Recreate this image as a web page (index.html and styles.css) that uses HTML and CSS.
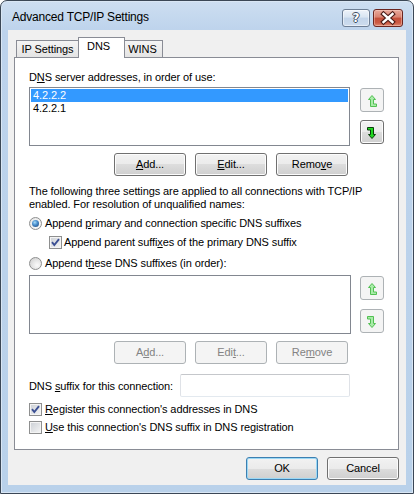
FILE: index.html
```html
<!DOCTYPE html>
<html>
<head>
<meta charset="utf-8">
<title>Advanced TCP/IP Settings</title>
<link rel="stylesheet" href="styles.css">
</head>
<body>
<div class="window">
  <div class="titlebar">
    <div class="title">Advanced TCP/IP Settings</div>
    <div class="caption">
      <div class="cap help"><span class="qmark">?</span></div>
      <div class="cap close">
        <svg width="28" height="16" viewBox="0 0 28 16">
          <path d="M9.5 4 L18.5 12 M18.5 4 L9.5 12" stroke="#4a1a16" stroke-width="4.6" stroke-linecap="square" fill="none"/>
          <path d="M9.5 4 L18.5 12 M18.5 4 L9.5 12" stroke="#ffffff" stroke-width="2.4" stroke-linecap="square" fill="none"/>
        </svg>
      </div>
    </div>
  </div>
  <div class="client">
    <div class="tabs">
      <div class="tab tab-ip">IP Settings</div>
      <div class="tab tab-dns">DNS</div>
      <div class="tab tab-wins">WINS</div>
    </div>
    <div class="panel">
      <div class="label">D<u>N</u>S server addresses, in order of use:</div>
      <div class="list-row list1">
        <div class="listbox">
          <div class="item selected">4.2.2.2</div>
          <div class="item">4.2.2.1</div>
        </div>
        <div class="arrows">
          <div class="arrow-btn disabled">
            <svg width="22" height="22" viewBox="0 0 22 22"><polygon points="11,6.5 14.5,10.5 12.5,10.5 12.5,15 15.5,15 15.5,17.5 9.5,17.5 9.5,10.5 7.5,10.5" fill="#a9eca9" stroke="#52c052" stroke-width="1" stroke-linejoin="miter"/></svg>
          </div>
          <div class="arrow-btn">
            <svg width="22" height="22" viewBox="0 0 22 22"><polygon transform="rotate(180 11 12)" points="11,6.5 14.5,10.5 12.5,10.5 12.5,15 15.5,15 15.5,17.5 9.5,17.5 9.5,10.5 7.5,10.5" fill="#20d820" stroke="#0b3d0b" stroke-width="1" stroke-linejoin="miter"/></svg>
          </div>
        </div>
      </div>
      <div class="btn-row">
        <div class="btn"><u>A</u>dd...</div>
        <div class="btn"><u>E</u>dit...</div>
        <div class="btn">Remo<u>v</u>e</div>
      </div>
      <p class="note">The following three settings are applied to all connections with TCP/IP<br>enabled. For resolution of unqualified names:</p>
      <div class="opt r1"><span class="radio checked"><span class="dot"></span></span><span>Append <u>p</u>rimary and connection specific DNS suffixes</span></div>
      <div class="opt sub">
        <span class="check"><svg width="11" height="11" viewBox="0 0 11 11"><path d="M2 5.2 L4.3 8 L9 2.2" fill="none" stroke="#3b4f93" stroke-width="1.9"/></svg></span>
        <span>Append parent suffi<u>x</u>es of the primary DNS suffix</span>
      </div>
      <div class="opt r2"><span class="radio"></span><span>Append t<u>h</u>ese DNS suffixes (in order):</span></div>
      <div class="list-row list2">
        <div class="listbox"></div>
        <div class="arrows">
          <div class="arrow-btn disabled">
            <svg width="22" height="22" viewBox="0 0 22 22"><polygon points="11,6.5 14.5,10.5 12.5,10.5 12.5,15 15.5,15 15.5,17.5 9.5,17.5 9.5,10.5 7.5,10.5" fill="#a9eca9" stroke="#52c052" stroke-width="1"/></svg>
          </div>
          <div class="arrow-btn disabled">
            <svg width="22" height="22" viewBox="0 0 22 22"><polygon transform="rotate(180 11 12)" points="11,6.5 14.5,10.5 12.5,10.5 12.5,15 15.5,15 15.5,17.5 9.5,17.5 9.5,10.5 7.5,10.5" fill="#a9eca9" stroke="#52c052" stroke-width="1"/></svg>
          </div>
        </div>
      </div>
      <div class="btn-row">
        <div class="btn disabled">A<u>d</u>d...</div>
        <div class="btn disabled">Edi<u>t</u>...</div>
        <div class="btn disabled">Re<u>m</u>ove</div>
      </div>
      <div class="suffix-row">
        <span>DNS <u>s</u>uffix for this connection:</span>
        <div class="textbox"></div>
      </div>
      <div class="opt reg">
        <span class="check"><svg width="11" height="11" viewBox="0 0 11 11"><path d="M2 5.2 L4.3 8 L9 2.2" fill="none" stroke="#3b4f93" stroke-width="1.9"/></svg></span>
        <span><u>R</u>egister this connection's addresses in DNS</span>
      </div>
      <div class="opt use">
        <span class="check"></span>
        <span><u>U</u>se this connection's DNS suffix in DNS registration</span>
      </div>
    </div>
    <div class="dialog-buttons">
      <div class="btn default">OK</div>
      <div class="btn">Cancel</div>
    </div>
  </div>
</div>
</body>
</html>
```

FILE: styles.css
```css
* { box-sizing: border-box; }
html, body { margin: 0; padding: 0; }
body {
  width: 414px;
  height: 494px;
  overflow: hidden;
  background: #ffffff;
  font-family: "Liberation Sans", Arial, sans-serif;
  font-size: 11px;
  letter-spacing: -0.1px;
  color: #000;
}
u { text-decoration: underline; text-underline-offset: 1px; }

.window {
  width: 414px;
  height: 494px;
  display: flex;
  flex-direction: column;
  border: 1px solid #3b4756;
  border-radius: 7px 7px 0 0;
  background: linear-gradient(#cddef1 0px, #bdd3ec 30px, #b9d1ea 100%);
  box-shadow: inset 0 0 0 1px #d9e6f4;
  padding: 0 7px 8px 7px;
}

.titlebar {
  height: 29px;
  display: flex;
  justify-content: space-between;
  align-items: flex-start;
  flex: none;
}
.title {
  margin-top: 9px;
  padding-left: 4px;
  font-size: 12px;
  letter-spacing: -0.2px;
  line-height: 15px;
  color: #000;
}
.caption {
  display: flex;
  gap: 3px;
  margin-top: 8px;
  margin-right: 3px;
}
.cap {
  height: 18px;
  border-radius: 3px;
  display: flex;
  align-items: center;
  justify-content: center;
}
.help {
  width: 28px;
  border: 1px solid #6d7e95;
  background: linear-gradient(#eef3fa 0%, #d9e5f2 45%, #c3d5ea 50%, #cddcee 100%);
  box-shadow: inset 0 0 0 1px rgba(255,255,255,0.5);
}
.qmark {
  font-family: "DejaVu Sans", sans-serif;
  font-weight: bold;
  font-size: 12px;
  line-height: 14px;
  letter-spacing: 0;
  color: #ffffff;
  text-shadow: 1px 0 0 #3e4d62, -1px 0 0 #3e4d62, 0 1px 0 #3e4d62, 0 -1px 0 #3e4d62;
}
.close {
  width: 30px;
  border: 1px solid #6b2520;
  background: linear-gradient(#e9a99c 0%, #d98170 45%, #c44e3a 50%, #cc5a44 80%, #de8a73 100%);
  box-shadow: inset 0 0 0 1px rgba(255,220,210,0.4);
}

.client {
  flex: 1;
  background: #f0f0f0;
  display: flex;
  flex-direction: column;
}

.tabs {
  display: flex;
  align-items: flex-end;
  height: 21px;
  margin-top: 7px;
  margin-left: 8px;
}
.tab {
  height: 18px;
  border: 1px solid #898c95;
  border-bottom: none;
  background: linear-gradient(#f4f4f4, #e3e3e3);
  line-height: 13px;
  padding-top: 2px;
  text-align: center;
}
.tab-ip { width: 63px; }
.tab-dns {
  width: 47px;
  height: 21px;
  margin-left: -1px;
  background: #ffffff;
  position: relative;
  z-index: 1;
  padding-right: 6px;
}
.tab-wins { width: 39px; margin-left: -1px; padding-right: 2px; }

.panel {
  margin: -1px 7px 0 6px;
  border: 1px solid #898c95;
  background: #ffffff;
  padding: 13px 0 14px 14px;
}
.label { line-height: 13px; }

.list-row { display: flex; align-items: flex-start; }
.list1 { margin-top: 3px; }
.list2 { margin-top: 4px; }
.listbox {
  width: 321px;
  height: 59px;
  border: 1px solid #828790;
  padding: 1px;
  background: #fff;
}
.list2 .listbox { width: 322px; }
.item {
  height: 13px;
  line-height: 13px;
  padding-left: 2px;
}
.item.selected { background: #3399ff; color: #ffffff; }

.arrows {
  display: flex;
  flex-direction: column;
  gap: 8px;
  padding-top: 1px;
  margin-left: 10px;
}
.list2 .arrows { gap: 9px; margin-left: 9px; }
.arrow-btn {
  width: 24px;
  height: 24px;
  border: 1px solid #707070;
  border-radius: 3px;
  background: linear-gradient(#f2f2f2 0%, #ebebeb 50%, #dddddd 50%, #cfcfcf 100%);
  box-shadow: inset 0 0 0 1px #fcfcfc;
}
.arrow-btn svg { display: block; }
.arrow-btn.disabled {
  border-color: #adb2b5;
  background: #f4f4f4;
  box-shadow: none;
}

.btn-row {
  width: 319px;
  display: flex;
  justify-content: flex-end;
  gap: 9px;
  margin-top: 7px;
}
.btn {
  width: 72px;
  height: 23px;
  border: 1px solid #707070;
  border-radius: 3px;
  background: linear-gradient(#f2f2f2 0%, #ebebeb 50%, #dddddd 50%, #cfcfcf 100%);
  box-shadow: inset 0 0 0 1px #fcfcfc;
  display: flex;
  align-items: center;
  justify-content: center;
  line-height: 13px;
}
.btn.disabled {
  border-color: #adb2b5;
  background: #f4f4f4;
  box-shadow: none;
  color: #838383;
}
.btn.default {
  border-color: #3c7fb1;
  box-shadow: inset 0 0 0 1px #9bd8f5;
}

.note {
  margin: 9px 0 0 0;
  line-height: 13px;
}

.opt {
  display: flex;
  align-items: center;
  height: 15px;
  line-height: 13px;
}
.r1 { margin-top: 5px; }
.sub { margin-top: 4px; padding-left: 20px; }
.r2 { margin-top: 6px; }
.reg { margin-top: 5px; }
.use { margin-top: 3px; }

.radio {
  width: 13px;
  height: 13px;
  border-radius: 50%;
  border: 1px solid #8e8f8f;
  background: radial-gradient(circle at 65% 65%, #fafafa 0%, #e6e6e6 45%, #c9c9c9 100%);
  display: flex;
  align-items: center;
  justify-content: center;
  margin-right: 3px;
  flex: none;
}
.radio.checked { background: radial-gradient(circle at 60% 60%, #ffffff 0%, #eeeeee 60%, #d4d4d4 100%); }
.dot {
  width: 7px;
  height: 7px;
  border-radius: 50%;
  background: radial-gradient(circle at 40% 35%, #a9dcf7 0%, #4a90cf 40%, #1a3f70 100%);
}

.check {
  width: 13px;
  height: 13px;
  border: 1px solid #8e8f8f;
  background: linear-gradient(135deg, #cbcfd5 0%, #f6f6f6 100%);
  box-shadow: inset 0 0 0 1px #f4f4f4;
  margin-right: 3px;
  flex: none;
}
.check svg { display: block; }
.sub .check { margin-right: 2px; }

.suffix-row {
  width: 321px;
  margin-top: 10px;
  display: flex;
  justify-content: space-between;
  align-items: center;
}
.textbox {
  width: 170px;
  height: 23px;
  border: 1px solid;
  border-color: #c5c7cb #dfe2e7 #e3e9ef #dfe2e7;
  border-radius: 2px;
  background: #ffffff;
}

.dialog-buttons {
  display: flex;
  justify-content: flex-end;
  gap: 9px;
  margin-top: 7px;
  margin-right: 7px;
}
```
